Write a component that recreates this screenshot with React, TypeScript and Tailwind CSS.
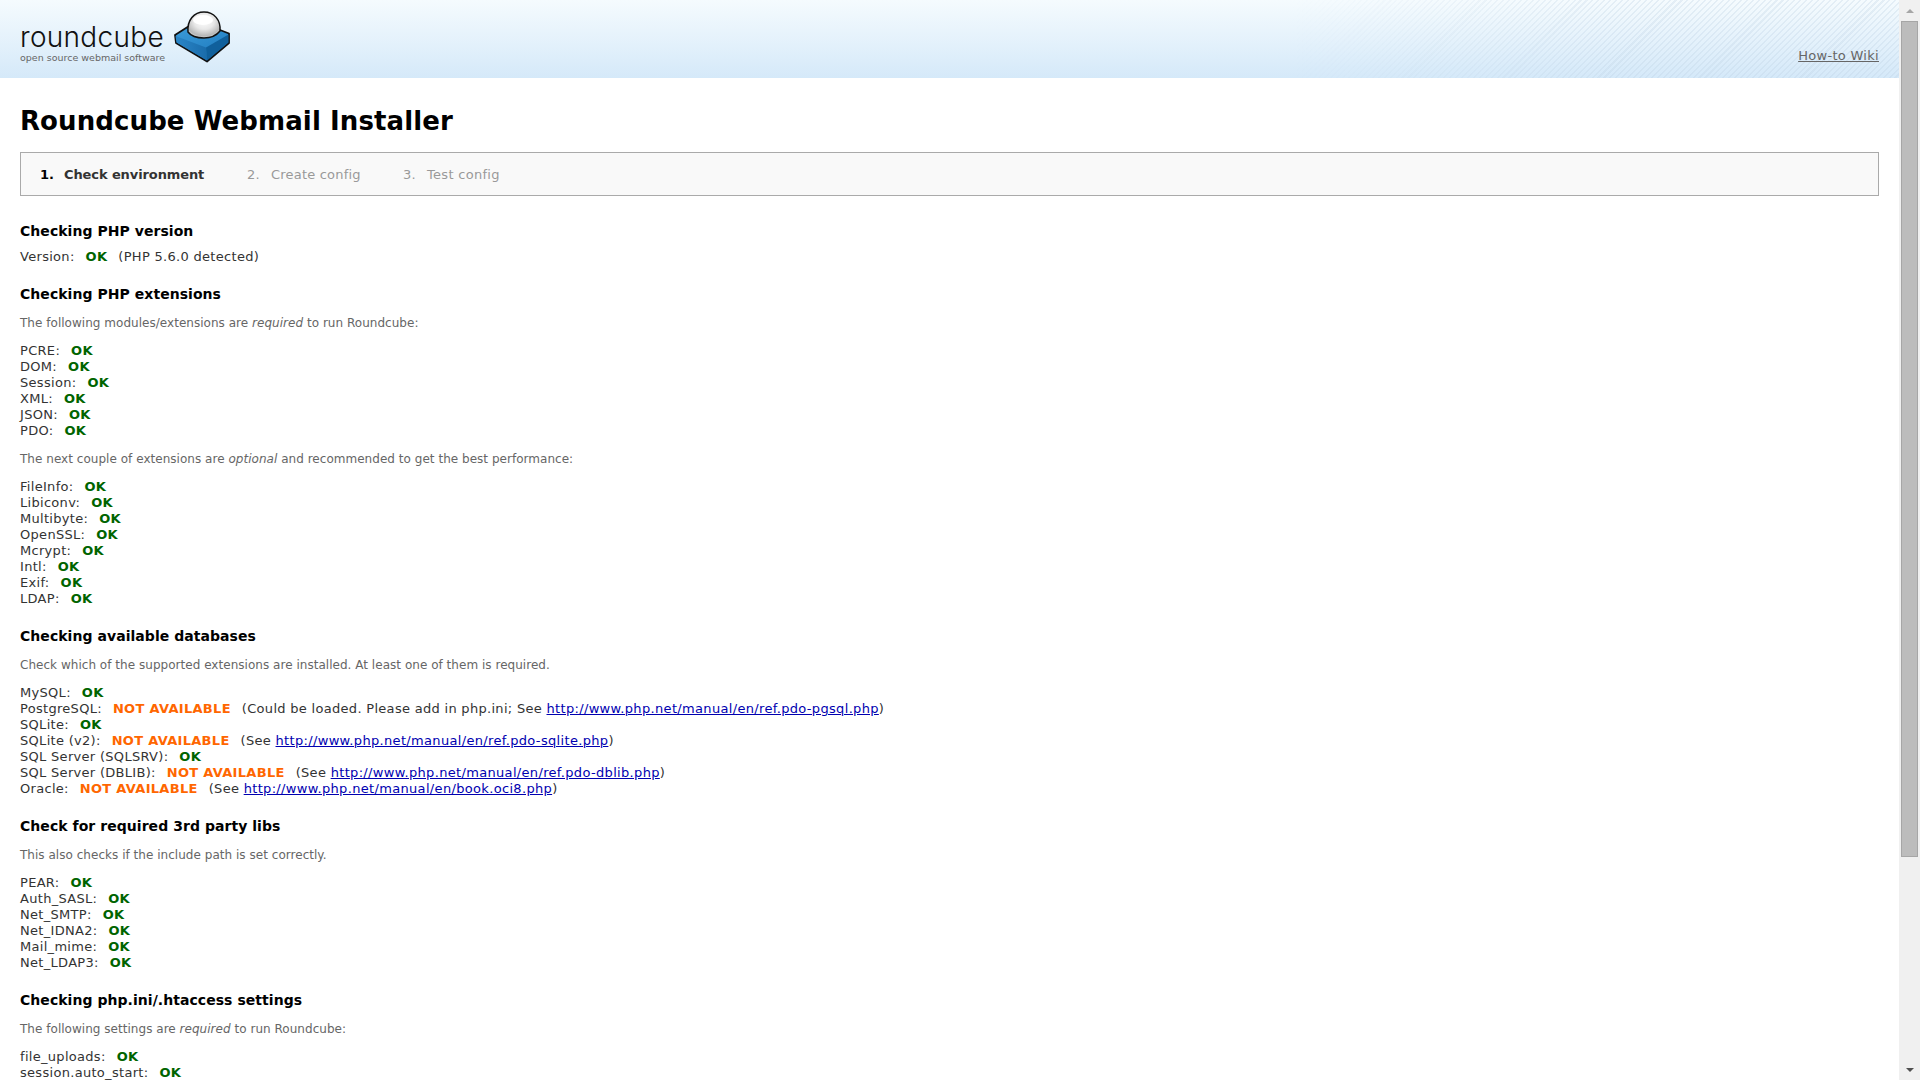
import React from "react";

const R = () => <b className="text-[#006400] ml-[11px]">OK</b>;
const N = () => <b className="text-[#ff6600] ml-[11px]">NOT AVAILABLE</b>;
const L = ({ h }: { h: string }) => <a href="#" className="text-[#0000b0] underline tracking-[0.33px]">{h}</a>;
const Row = ({ n, children }: { n: string; children?: React.ReactNode }) => (
  <div className="h-4 leading-4 whitespace-pre">{n}:<R />{children}</div>
);
const Bad = ({ n, children }: { n: string; children?: React.ReactNode }) => (
  <div className="h-4 leading-4 whitespace-pre">{n}:<N />{children}</div>
);
const H = ({ children, cls }: { children: React.ReactNode; cls: string }) => (
  <h3 className={`text-[14px] leading-4 font-bold text-black tracking-[0.05px] ${cls}`}>{children}</h3>
);
const P = ({ children, cls }: { children: React.ReactNode; cls: string }) => (
  <p className={`text-[#666] text-[12px] leading-4 tracking-[0.03px] ${cls}`}>{children}</p>
);

function Cube() {
  return (
    <svg width="70" height="60" viewBox="0 0 70 60" className="shrink-0">
      <defs>
        <linearGradient id="top" x1="0" y1="0" x2="0.6" y2="1"><stop offset="0" stopColor="#3f9fdc" /><stop offset="1" stopColor="#1f7cc0" /></linearGradient>
        <linearGradient id="left" x1="0" y1="0" x2="1" y2="0"><stop offset="0" stopColor="#2a86c8" /><stop offset="1" stopColor="#1a6cab" /></linearGradient>
        <radialGradient id="ball" cx="0.5" cy="0.35" r="0.7"><stop offset="0" stopColor="#ffffff" /><stop offset="0.45" stopColor="#e8e8e8" /><stop offset="0.8" stopColor="#b8b8b8" /><stop offset="1" stopColor="#dcdcdc" /></radialGradient>
      </defs>
      <path d="M5 30 L27 16 L59 28.5 L59 38 L37 56.5 L6 38 Z" fill="url(#top)" stroke="#111" strokeWidth="1.8" strokeLinejoin="round" />
      <path d="M5.5 31 L36 42.5 L37 55.5 L6.5 37.5 Z" fill="url(#left)" />
      <path d="M36 42.5 L58.5 29.5 L58.5 37.5 L37 55.5 Z" fill="#10609c" />
      <path d="M18 27 C17 15 24 7 34 7 C44 7 51 15 50 26 C46 31 40 33 34 33 C27 33 21 31 18 27 Z" fill="url(#ball)" stroke="#111" strokeWidth="1.5" />
      <ellipse cx="33" cy="15" rx="10" ry="5" fill="#fff" opacity="0.95" />
    </svg>
  );
}

export default function App() {
  return (
    <div className="flex h-screen w-full overflow-hidden bg-white font-['DejaVu_Sans',Verdana,sans-serif] text-[13px] tracking-[0.3px] text-[#333]">
      <main className="flex-1 min-w-0">
        <header className="relative h-[78px] bg-[linear-gradient(to_bottom,#f5fbfe,#d5e9f9)] overflow-hidden">
          <div className="absolute inset-0 bg-[repeating-linear-gradient(135deg,rgba(190,210,228,0.3)_0px,rgba(190,210,228,0.3)_1.5px,transparent_1.5px,transparent_4.2px)] [mask-image:linear-gradient(to_right,transparent_68%,black_85%)]" />
          <div className="relative flex pl-5 pt-[5px]">
            <div className="w-[150px] pt-[17px]">
              <div className="font-['Inter',sans-serif] font-light text-[28px] leading-[30px] text-[#111] tracking-[0.3px]">roundcube</div>
              <div className="text-[9.5px] leading-[10px] tracking-normal text-[#666] whitespace-nowrap mt-[1px]">open source webmail software</div>
            </div>
            <Cube />
          </div>
          <a href="#" className="absolute right-[20px] top-[48px] text-[#666] underline leading-4">How-to Wiki</a>
        </header>
        <div className="pl-5 pr-[20px]">
          <h1 className="text-[26px] leading-8 tracking-[0.1px] font-bold text-black mt-[27px]">Roundcube Webmail Installer</h1>
          <div className="flex h-[44px] items-center border border-[#aaa] bg-[#f9f9f9] mt-[15px] pt-[2px] pl-[19px] text-[#999] tracking-[0.2px]">
            <b className="w-[24px] text-black tracking-normal">1.</b>
            <b className="w-[183px] text-[#333] tracking-[-0.1px]">Check environment</b>
            <span className="w-[24px]">2.</span>
            <span className="w-[132px]">Create config</span>
            <span className="w-[24px]">3.</span>
            <span className="tracking-[0.3px]">Test config</span>
          </div>
          <H cls="mt-[27px]">Checking PHP version</H>
          <div className="h-4 leading-4 mt-[10px] whitespace-pre">Version:<R /><span className="ml-[11px]">(PHP 5.6.0 detected)</span></div>
          <H cls="mt-[21px]">Checking PHP extensions</H>
          <P cls="mt-[13px]">The following modules/extensions are <i>required</i> to run Roundcube:</P>
          <div className="mt-[12px]">
            {["PCRE","DOM","Session","XML","JSON","PDO"].map(n => <Row key={n} n={n} />)}
          </div>
          <P cls="mt-[12px]">The next couple of extensions are <i>optional</i> and recommended to get the best performance:</P>
          <div className="mt-[12px]">
            {["FileInfo","Libiconv","Multibyte","OpenSSL","Mcrypt","Intl","Exif","LDAP"].map(n => <Row key={n} n={n} />)}
          </div>
          <H cls="mt-[21px]">Checking available databases</H>
          <P cls="mt-[13px]">Check which of the supported extensions are installed. At least one of them is required.</P>
          <div className="mt-[12px]">
            <Row n="MySQL" />
            <Bad n="PostgreSQL"><span className="ml-[11px]">(Could be loaded. Please add in php.ini; See <L h="http://www.php.net/manual/en/ref.pdo-pgsql.php" />)</span></Bad>
            <Row n="SQLite" />
            <Bad n="SQLite (v2)"><span className="ml-[11px]">(See <L h="http://www.php.net/manual/en/ref.pdo-sqlite.php" />)</span></Bad>
            <Row n="SQL Server (SQLSRV)" />
            <Bad n="SQL Server (DBLIB)"><span className="ml-[11px]">(See <L h="http://www.php.net/manual/en/ref.pdo-dblib.php" />)</span></Bad>
            <Bad n="Oracle"><span className="ml-[11px]">(See <L h="http://www.php.net/manual/en/book.oci8.php" />)</span></Bad>
          </div>
          <H cls="mt-[21px]">Check for required 3rd party libs</H>
          <P cls="mt-[13px]">This also checks if the include path is set correctly.</P>
          <div className="mt-[12px]">
            {["PEAR","Auth_SASL","Net_SMTP","Net_IDNA2","Mail_mime","Net_LDAP3"].map(n => <Row key={n} n={n} />)}
          </div>
          <H cls="mt-[21px]">Checking php.ini/.htaccess settings</H>
          <P cls="mt-[13px]">The following settings are <i>required</i> to run Roundcube:</P>
          <div className="mt-[12px]">
            <Row n="file_uploads" />
            <Row n="session.auto_start" />
          </div>
        </div>
      </main>
      <aside className="flex w-[21px] shrink-0 flex-col items-center bg-[#f0f0f0]">
        <div className="flex h-[21px] w-full items-center justify-center"><div className="h-0 w-0 border-x-[4px] border-b-[4px] border-x-transparent border-b-[#a6a6a6]" /></div>
        <div className="h-[836px] w-[17px] border border-[#a6a6a6] bg-[#bcbcbc]" />
        <div className="flex-1" />
        <div className="flex h-[21px] w-full items-center justify-center"><div className="h-0 w-0 border-x-[4px] border-t-[4px] border-x-transparent border-t-[#505050]" /></div>
      </aside>
    </div>
  );
}
